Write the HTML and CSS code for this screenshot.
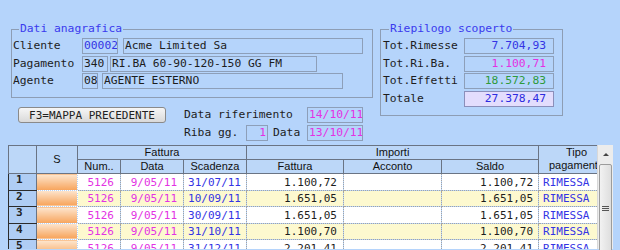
FILE: index.html
```html
<!DOCTYPE html>
<html lang="it">
<head>
    <meta charset="UTF-8">
    <title>Scoperto clienti</title>
    <link rel="stylesheet" href="styles.css">
</head>
<body>
    <div class="top">
        <div class="left">
            <!-- Dati anagrafica -->
            <fieldset class="group anag">
                <legend>Dati anagrafica</legend>
                <div class="row">
                    <span class="lbl">Cliente</span>
                    <span class="box blue w-cli">00002</span>
                    <span class="box w-rag">Acme Limited Sa</span>
                </div>
                <div class="row">
                    <span class="lbl">Pagamento</span>
                    <span class="box w-pag">340</span>
                    <span class="box w-pagdes">RI.BA 60-90-120-150 GG FM</span>
                </div>
                <div class="row">
                    <span class="lbl">Agente</span>
                    <span class="box w-age">08</span>
                    <span class="box w-agedes">AGENTE ESTERNO</span>
                </div>
            </fieldset>

            <!-- Riferimenti -->
            <div class="controls">
                <button class="btn">F3=MAPPA PRECEDENTE</button>
                <span class="ctl-lbl span3">Data riferimento</span>
                <span class="box num magenta">14/10/11</span>

                <span class="ctl-lbl col2">Riba gg.</span>
                <span class="box num magenta">1</span>
                <span class="ctl-lbl pad">Data</span>
                <span class="box num magenta">13/10/11</span>
            </div>
        </div>

        <!-- Riepilogo scoperto -->
        <fieldset class="group riep">
            <legend>Riepilogo scoperto</legend>
            <div class="row">
                <span class="lbl">Tot.Rimesse</span>
                <span class="box val blue">7.704,93</span>
            </div>
            <div class="row">
                <span class="lbl">Tot.Ri.Ba.</span>
                <span class="box val magenta">1.100,71</span>
            </div>
            <div class="row">
                <span class="lbl">Tot.Effetti</span>
                <span class="box val green">18.572,83</span>
            </div>
            <div class="row">
                <span class="lbl">Totale</span>
                <span class="box val total">27.378,47</span>
            </div>
        </fieldset>
    </div>

    <!-- Griglia fatture -->
    <div class="grid-wrap">
        <div class="grid-clip">
            <table class="grid">
                <colgroup>
                    <col style="width:28px">
                    <col style="width:41px">
                    <col style="width:43px">
                    <col style="width:63px">
                    <col style="width:63px">
                    <col style="width:97px">
                    <col style="width:98px">
                    <col style="width:97px">
                    <col style="width:76px">
                </colgroup>
                <thead>
                    <tr>
                        <th rowspan="2"></th>
                        <th rowspan="2">S</th>
                        <th colspan="3">Fattura</th>
                        <th colspan="3">Importi</th>
                        <th rowspan="2" class="tipo">Tipo<br>pagamento</th>
                    </tr>
                    <tr>
                        <th>Num..</th>
                        <th>Data</th>
                        <th>Scadenza</th>
                        <th>Fattura</th>
                        <th>Acconto</th>
                        <th>Saldo</th>
                    </tr>
                </thead>
                <tbody>
                    <tr>
                        <td class="rn">1</td><td class="st"></td>
                        <td class="magenta">5126</td><td class="magenta">9/05/11</td><td class="blue">31/07/11</td>
                        <td>1.100,72</td><td></td><td>1.100,72</td><td class="tp">RIMESSA</td>
                    </tr>
                    <tr class="alt">
                        <td class="rn">2</td><td class="st"></td>
                        <td class="magenta">5126</td><td class="magenta">9/05/11</td><td class="blue">10/09/11</td>
                        <td>1.651,05</td><td></td><td>1.651,05</td><td class="tp">RIMESSA</td>
                    </tr>
                    <tr>
                        <td class="rn">3</td><td class="st"></td>
                        <td class="magenta">5126</td><td class="magenta">9/05/11</td><td class="blue">30/09/11</td>
                        <td>1.651,05</td><td></td><td>1.651,05</td><td class="tp">RIMESSA</td>
                    </tr>
                    <tr class="alt">
                        <td class="rn">4</td><td class="st"></td>
                        <td class="magenta">5126</td><td class="magenta">9/05/11</td><td class="blue">31/10/11</td>
                        <td>1.100,70</td><td></td><td>1.100,70</td><td class="tp">RIMESSA</td>
                    </tr>
                    <tr>
                        <td class="rn">5</td><td class="st"></td>
                        <td class="magenta">5126</td><td class="magenta">9/05/11</td><td class="blue">31/12/11</td>
                        <td>2.201,41</td><td></td><td>2.201,41</td><td class="tp">RIMESSA</td>
                    </tr>
                </tbody>
            </table>
        </div>
        <!-- scrollbar -->
        <div class="vscroll">
            <div class="vs-up"><span class="vs-arrow"></span></div>
            <div class="vs-thumb"><span class="vs-grip"></span></div>
        </div>
    </div>
</body>
</html>
```

FILE: styles.css
```css
*{
    margin: 0;
    padding: 0;
    box-sizing: border-box;
}
body{
    width: 620px;
    height: 250px;
    overflow: hidden;
    background: #b5d4fb;
    font-family: "DejaVu Sans Mono", "Liberation Mono", monospace;
    font-size: 11.3px;
    color: #1d1d1d;
}

.blue{ color: #3434e4; }
.magenta{ color: #e332e3; }
.green{ color: #2f9a3b; }

/* top area */
.top{
    display: flex;
    align-items: flex-start;
    padding: 22px 0 0 11px;
}
.left{
    width: 362px;
}

.group{
    border: 1px solid #8d9db4;
    padding: 2px 1px 8px 1px;
    min-width: 0;
}
.group legend{
    margin-left: 6px;
    padding: 0 1px;
    line-height: 14px;
    color: #3a3aee;
}
.anag{
    width: 362px;
}
.riep{
    width: 183px;
    margin-left: 7px;
    padding-left: 2px;
}

.row{
    display: flex;
    height: 16px;
    margin-bottom: 1.7px;
}
.row:last-child{
    margin-bottom: 0;
}
.lbl{
    width: 69px;
    line-height: 16px;
    white-space: nowrap;
}
.riep .lbl{
    width: 81px;
}

.box{
    height: 16px;
    border: 1px solid #8d9fb9;
    padding: 0 1px;
    line-height: 14px;
    white-space: nowrap;
    overflow: hidden;
}
.w-cli{ width: 36px; }
.w-rag{ width: 240px; margin-left: 5px; }
.w-pag{ width: 26px; }
.w-pagdes{ width: 207px; margin-left: 2px; }
.w-age{ width: 16px; }
.w-agedes{ width: 241px; margin-left: 4px; }

.val{
    width: 90px;
    text-align: right;
    padding-right: 7px;
}
.total{
    background: #e3ddfd;
    border-color: #8b8fba;
    color: #2c2ce0;
}

/* controls */
.controls{
    display: grid;
    grid-template-columns: 173px 62px 22px 39px 56px;
    grid-template-rows: 16px 16px;
    row-gap: 2px;
    margin-top: 9px;
}
.btn{
    margin-left: 7px;
    width: 148px;
    height: 16px;
    font: inherit;
    font-size: 11px;
    color: #222;
    border: 1px solid #8a8a8a;
    border-radius: 3px;
    background: linear-gradient(#f6f6f6, #d9d9d9);
}
.ctl-lbl{
    line-height: 16px;
    white-space: nowrap;
}
.span3{ grid-column: 2 / 5; }
.col2{ grid-column: 2; }
.pad{ padding-left: 5px; }
.num{
    text-align: right;
    padding-right: 1px;
}

/* grid */
.grid-wrap{
    display: flex;
    margin: 4px 0 0 8px;
    width: 605px;
    height: 104px;
}
.grid-clip{
    width: 589px;
    overflow: hidden;
}
.grid{
    border-collapse: collapse;
    table-layout: fixed;
    width: 606px;
    font-size: 11px;
}
.grid th{
    height: 14px;
    padding: 0;
    background: #bcd7f8;
    border: 1px solid #6a7484;
    font-family: "Liberation Sans", Arial, sans-serif;
    font-size: 11px;
    font-weight: normal;
    line-height: 13px;
    color: #111;
    white-space: nowrap;
    overflow: hidden;
}
.grid th.tipo{
    line-height: 13px;
    vertical-align: top;
}
.grid td{
    height: 16.5px;
    padding: 0 6px 0 0;
    background: #fff;
    border: 1px dotted #a4a4a4;
    text-align: right;
    white-space: nowrap;
    overflow: hidden;
    line-height: 15px;
}
.grid tr.alt td{
    background: #fdf9cf;
}
.grid td:nth-child(5){ padding-right: 5px; }
.grid td:nth-child(8){ padding-right: 5px; }
.grid td.rn,
.grid tr.alt td.rn{
    background: #afcdf4;
    border: 1px solid #2c2c2c;
    border-right-color: #6a7484;
    text-align: left;
    padding-left: 7px;
    font-weight: bold;
    vertical-align: top;
    line-height: 12px;
    color: #222;
}
.grid td.st,
.grid tr.alt td.st{
    background: linear-gradient(#fde6cf, #f7a35a);
    border-color: #fff;
}
.grid td.tp{
    text-align: left;
    padding: 0 0 0 4px;
    color: #3434e4;
}

/* scrollbar */
.vscroll{
    width: 16px;
    height: 104px;
    background: #ececec;
    border-left: 1px solid #d8d8d8;
    padding: 0 1px 0 1px;
}
.vs-up{
    height: 18px;
    display: flex;
    align-items: center;
    justify-content: center;
}
.vs-arrow{
    width: 0;
    height: 0;
    border-left: 3px solid transparent;
    border-right: 3px solid transparent;
    border-bottom: 3px solid #444;
}
.vs-thumb{
    height: 100px;
    margin-top: 1px;
    border: 1px solid #9c9c9c;
    border-radius: 2px;
    background: linear-gradient(90deg, #f2f2f2, #dedede);
    display: flex;
    justify-content: center;
    padding-top: 41px;
}
.vs-grip{
    width: 7px;
    height: 5px;
    background: repeating-linear-gradient(#555 0 1px, transparent 1px 2px);
}
```
